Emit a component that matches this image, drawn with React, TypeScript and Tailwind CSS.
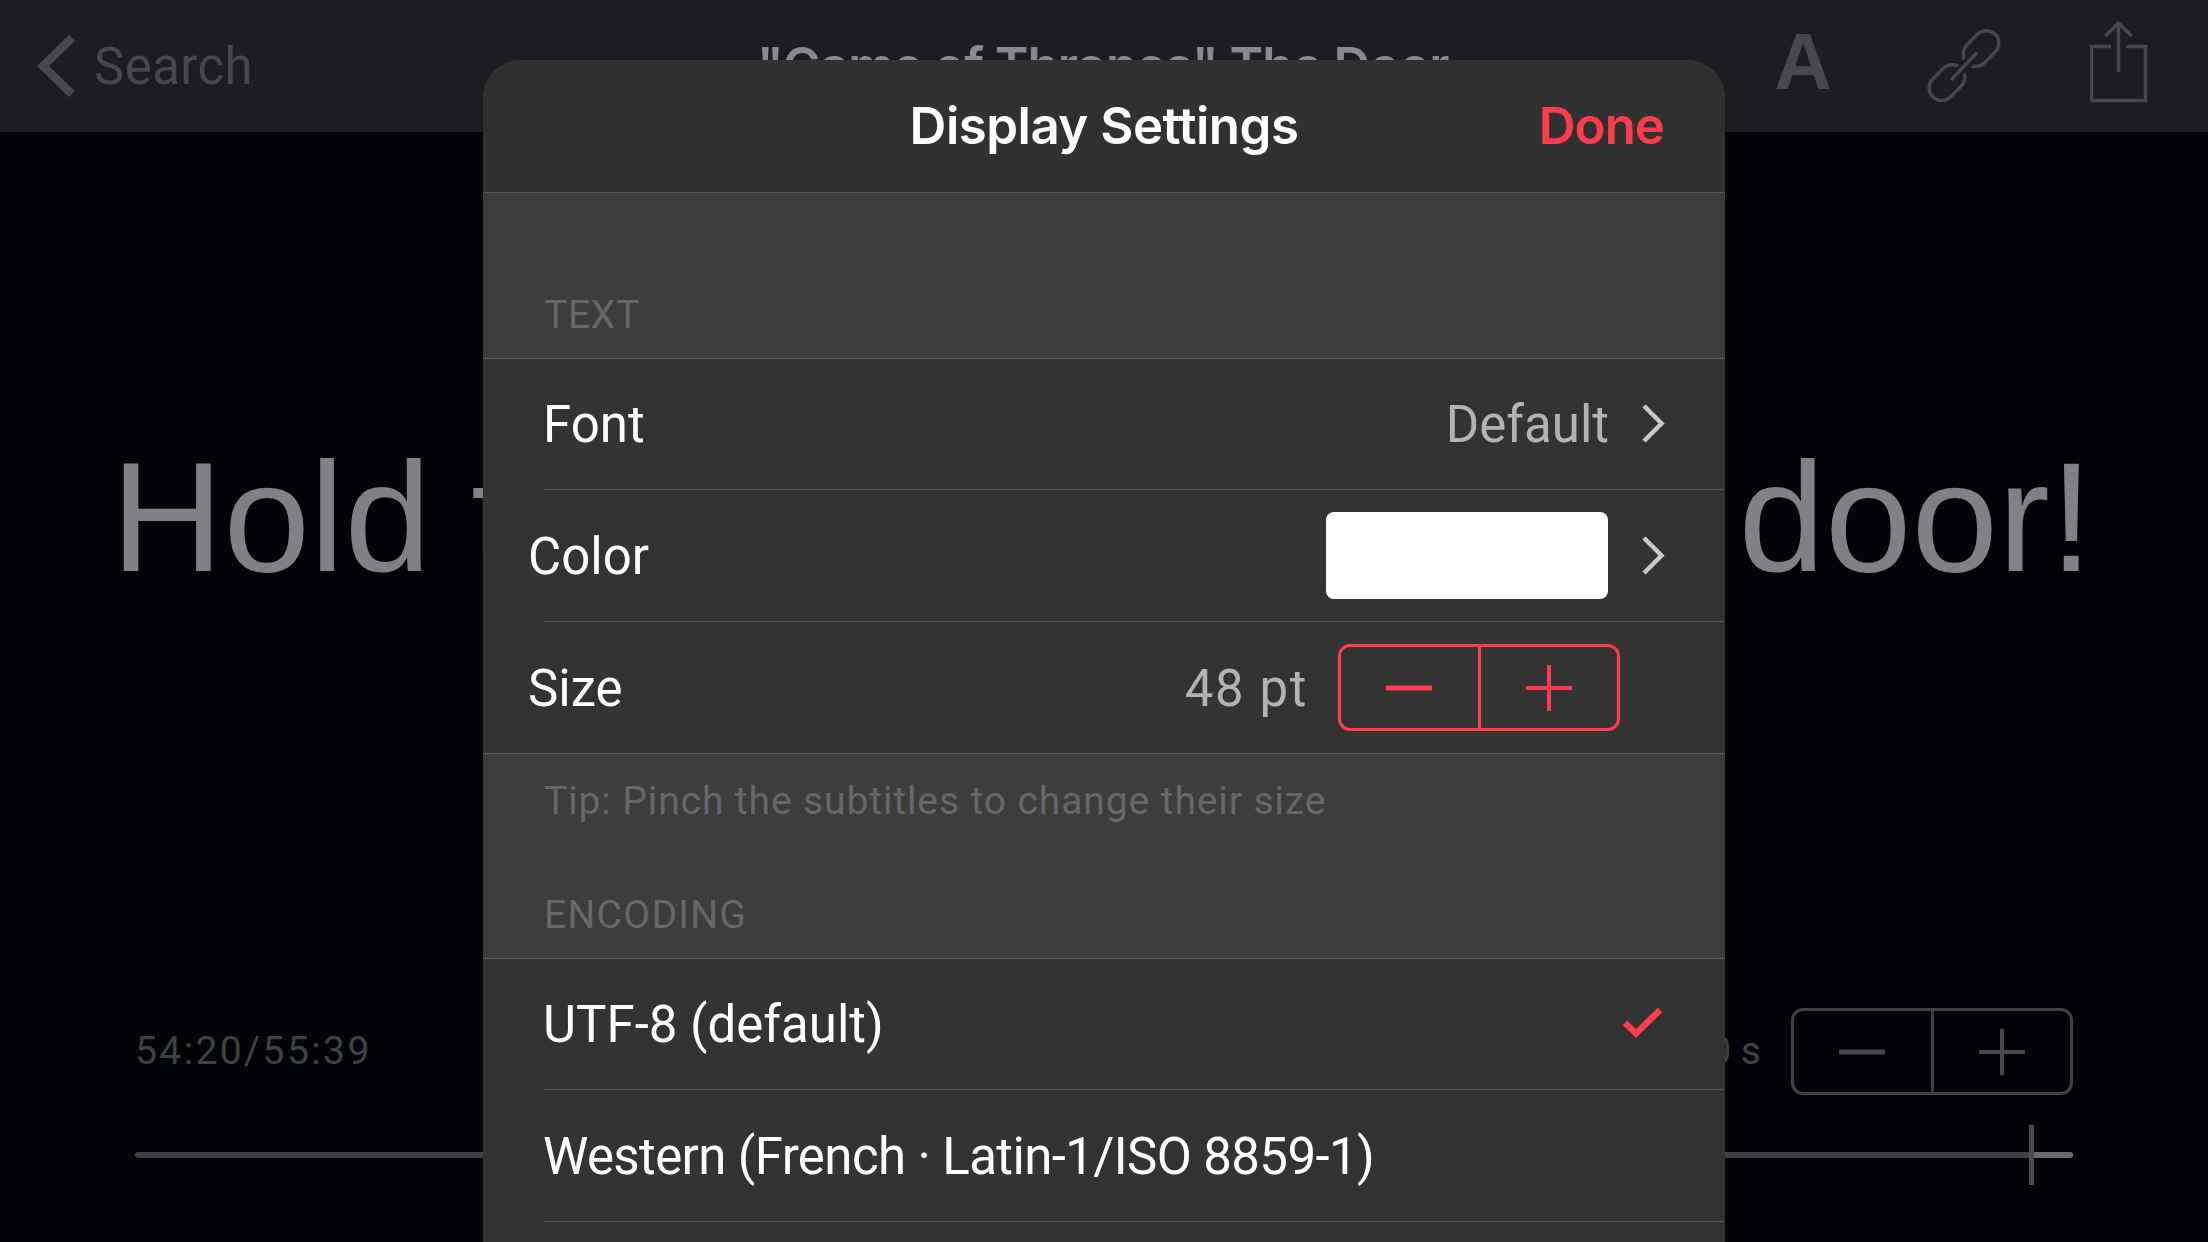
const sf = "font-['Roboto','Liberation_Sans',sans-serif]";
const title = "font-['Inter','Liberation_Sans',sans-serif] font-semibold";

function Chevron() {
  return (
    <svg width="24" height="40" viewBox="0 0 24 40" fill="none" className="shrink-0">
      <path d="M3 2 L20.5 19.5 L3 37" stroke="#c9c9c9" strokeWidth="4.5" />
    </svg>
  );
}

function Stepper({ color, line, thin }: { color: string; line: string; thin: string }) {
  return (
    <div className="flex h-[87px] w-[282px] shrink-0 rounded-[12px] border-[3px]" style={{ borderColor: line }}>
      <div className="flex flex-1 items-center justify-center border-r-[3px]" style={{ borderColor: thin }}>
        <svg width="46" height="46" viewBox="0 0 46 46">
          <path d="M0 23 H46" stroke={color} strokeWidth="5" />
        </svg>
      </div>
      <div className="flex flex-1 items-center justify-center">
        <svg width="46" height="46" viewBox="0 0 46 46">
          <path d="M0 23 H46 M23 0 V46" stroke={color} strokeWidth="4" />
        </svg>
      </div>
    </div>
  );
}

function LinkIcon() {
  return (
    <svg width="74" height="74" viewBox="1928 26 74 74" fill="none">
      <rect x="1962" y="33" width="40" height="25" rx="12.5" transform="rotate(-45 1982 45.5)" stroke="#46484d" strokeWidth="3.5" />
      <rect x="1928" y="67" width="40" height="25" rx="12.5" transform="rotate(-45 1948 79.5)" stroke="#46484d" strokeWidth="3.5" />
      <path d="M1950 79 L1980 49" stroke="#1c1d21" strokeWidth="10" />
      <path d="M1952 77 L1978 49.5" stroke="#46484d" strokeWidth="3.5" />
    </svg>
  );
}

function ShareIcon() {
  return (
    <svg width="58" height="82" viewBox="2091 22 58 82" fill="none">
      <path d="M2112 47.5 H2092.5 V101.5 H2146.5 V47.5 H2127" stroke="#46484d" strokeWidth="3.5" />
      <path d="M2119.5 73 V24 M2106.5 37 L2119.5 24 L2132.5 37" stroke="#46484d" strokeWidth="3.5" />
    </svg>
  );
}

export default function App() {
  return (
    <div className={`relative flex h-[1242px] w-[2208px] flex-col overflow-hidden bg-[#030408] ${sf}`}>
      <header className="flex h-[132px] shrink-0 items-center bg-[#1c1d21] pr-[60px] pl-[37px]">
        <div className="flex w-[720px] items-center gap-[19px]">
          <svg width="38" height="62" viewBox="0 0 38 62" fill="none">
            <path d="M35 3 L6 31 L35 59" stroke="#46484d" strokeWidth="8.5" />
          </svg>
          <span className="pt-[2px] text-[51px] tracking-[0.4px] text-[#46484d]">Search</span>
        </div>
        <div className={`w-[703px] text-[51px] tracking-[-1px] whitespace-nowrap text-[#88898d] ${title}`}>"Game of Thrones" The Door</div>
        <div className="flex flex-1 items-center justify-end">
          <span className="mr-[95px] -mt-[8px] font-['Liberation_Sans',sans-serif] text-[80px] leading-none font-bold text-[#46484d]">A</span>
          <div className="mr-[89px] flex"><LinkIcon /></div>
          <div className="-mt-[8px] flex"><ShareIcon /></div>
        </div>
      </header>

      <main className="flex min-h-0 flex-1 flex-col px-[135px]">
        <div className="-mr-[58px] -ml-[62px] mt-[300px] text-center font-['Liberation_Sans',sans-serif] text-[155.5px] leading-[170px] [word-spacing:-3px] whitespace-nowrap text-[#808185]">
          Hold the door! Hold the door!
        </div>
        <div className="mt-[406px] flex items-center justify-between">
          <span className="text-[39px] tracking-[2.4px] text-[#3f4145]">54:20/55:39</span>
          <div className="flex items-center gap-[30px]">
            <span className="text-[39px] text-[#3f4145]">0 s</span>
            <Stepper color="#46484d" line="#3f4145" thin="#3f4145" />
          </div>
        </div>
        <div className="relative mt-[57px] h-[6px] rounded-full bg-[#3e4044]">
          <div className="absolute top-0 right-0 h-[6px] w-[41px] rounded-r-full bg-[#6a6b6e]" />
          <div className="absolute -top-[27px] right-[39px] h-[60px] w-[5px] bg-[#4b4d51]" />
        </div>
      </main>

      <section className="absolute top-[60px] left-[483px] h-[1182px] w-[1242px] overflow-hidden rounded-t-[38px] bg-[#3c3c3c] text-[51px] text-white">
        <div className="relative flex h-[133px] items-center justify-center border-b border-[#575757] bg-[#313131]">
          <span className={`tracking-[-0.5px] ${title}`}>Display Settings</span>
          <span className={`absolute right-[61px] tracking-[-1px] text-[#ff3b4e] ${title}`}>Done</span>
        </div>

        <div className="flex h-[166px] items-end border-b border-[#575757] pb-[14px] pl-[61px] text-[39px] tracking-[0.7px] text-[#66676b]">TEXT</div>

        <div className="bg-[#333333]">
          <div className="ml-[60px] flex h-[131px] items-center justify-between border-b border-[#575757] pr-[60px]">
            <span className="pt-[3px]">Font</span>
            <div className="flex items-center gap-[32px] text-[#b3b3b3]">
              <span className="pt-[3px]">Default</span>
              <Chevron />
            </div>
          </div>
          <div className="ml-[60px] flex h-[132px] items-center justify-between border-b border-[#575757] pr-[60px]">
            <span className="-ml-[15px] pt-[3px]">Color</span>
            <div className="flex items-center gap-[33px]">
              <div className="h-[87px] w-[282px] rounded-[8px] bg-white" />
              <Chevron />
            </div>
          </div>
          <div className="flex h-[131px] items-center justify-between pr-[105px] pl-[45px]">
            <span className="pt-[4px]">Size</span>
            <div className="flex items-center gap-[30px]">
              <span className="pt-[4px] tracking-[1.6px] text-[#b3b3b3]">48 pt</span>
              <Stepper color="#ff3b4e" line="#ff3b4e" thin="#ff3b4e" />
            </div>
          </div>
        </div>

        <div className="flex h-[206px] flex-col justify-between border-y border-[#575757] pt-[18px] pb-[14px] pl-[61px] text-[39px] text-[#66676b]">
          <span className="tracking-[0.9px]">Tip: Pinch the subtitles to change their size</span>
          <span className="tracking-[1.3px]">ENCODING</span>
        </div>

        <div className="bg-[#333333]">
          <div className="ml-[60px] flex h-[131px] items-center justify-between border-b border-[#575757] pr-[62px]">
            <span className="pt-[2px]">UTF-8 (default)</span>
            <svg width="40" height="32" viewBox="0 0 40 32" fill="none">
              <path d="M2 15 L13 25.5 L37 2" stroke="#ff3b4e" strokeWidth="6.5" />
            </svg>
          </div>
          <div className="ml-[60px] flex h-[132px] items-center border-b border-[#575757]">
            <span className="pt-[4px] tracking-[-0.6px]">Western (French · Latin-1/ISO 8859-1)</span>
          </div>
          <div className="h-[40px]" />
        </div>
      </section>
    </div>
  );
}
